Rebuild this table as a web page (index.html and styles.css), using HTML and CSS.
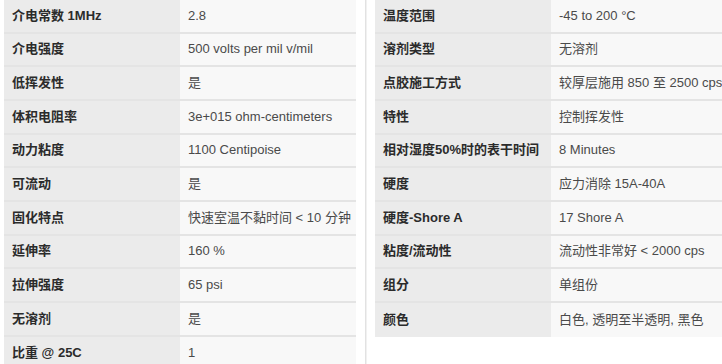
FILE: index.html
```html
<!DOCTYPE html>
<html lang="zh">
<head>
<meta charset="utf-8">
<title>Specs</title>
<link rel="stylesheet" href="styles.css">
</head>
<body>
<div class="page">
  <div class="spec">
    <div class="k">介电常数 1MHz</div><div class="v">2.8</div>
    <div class="k">介电强度</div><div class="v">500 volts per mil v/mil</div>
    <div class="k">低挥发性</div><div class="v">是</div>
    <div class="k">体积电阻率</div><div class="v">3e+015 ohm-centimeters</div>
    <div class="k">动力粘度</div><div class="v">1100 Centipoise</div>
    <div class="k">可流动</div><div class="v">是</div>
    <div class="k">固化特点</div><div class="v">快速室温不黏时间 &lt; 10 分钟</div>
    <div class="k">延伸率</div><div class="v">160 %</div>
    <div class="k">拉伸强度</div><div class="v">65 psi</div>
    <div class="k">无溶剂</div><div class="v">是</div>
    <div class="k last">比重 @ 25C</div><div class="v last">1</div>
  </div>
  <div class="divider"></div>
  <div class="spec">
    <div class="k">温度范围</div><div class="v">-45 to 200 °C</div>
    <div class="k">溶剂类型</div><div class="v">无溶剂</div>
    <div class="k">点胶施工方式</div><div class="v">较厚层施用 850 至 2500 cps</div>
    <div class="k">特性</div><div class="v">控制挥发性</div>
    <div class="k">相对湿度50%时的表干时间</div><div class="v">8 Minutes</div>
    <div class="k">硬度</div><div class="v">应力消除 15A-40A</div>
    <div class="k">硬度-Shore A</div><div class="v">17 Shore A</div>
    <div class="k">粘度/流动性</div><div class="v">流动性非常好 &lt; 2000 cps</div>
    <div class="k">组分</div><div class="v">单组份</div>
    <div class="k last">颜色</div><div class="v last">白色, 透明至半透明, 黑色</div>
  </div>
</div>
</body>
</html>
```

FILE: styles.css
```css
html, body {
  margin: 0;
  padding: 0;
  background: #ffffff;
}

body {
  font-family: "Liberation Sans", "Noto Sans CJK SC", sans-serif;
  font-size: 13px;
  overflow: hidden;
  width: 722px;
  height: 364px;
}

.page {
  display: flex;
  align-items: flex-start;
  padding-left: 4px;
  height: 364px;
  width: 740px;
}

.spec {
  display: grid;
  grid-template-columns: 176px 176px;
  flex: none;
}

.divider {
  flex: none;
  width: 1px;
  height: 364px;
  margin: 0 9px;
  background: #e2e2e2;
  box-shadow: 1px 0 0 #f1f1f1;
}

.k, .v {
  display: flex;
  align-items: center;
  box-sizing: border-box;
  height: 33.67px;
  padding: 0 8px;
  border-bottom: 2px solid #e4e4e4;
  white-space: nowrap;
  line-height: 16px;
}

.k {
  background: #ebebeb;
  color: #2b2b2b;
  font-weight: bold;
}

.v {
  background: #f8f8f8;
  color: #4a4a4a;
}

.k.last, .v.last {
  border-bottom: none;
  height: 33.67px;
}
```
